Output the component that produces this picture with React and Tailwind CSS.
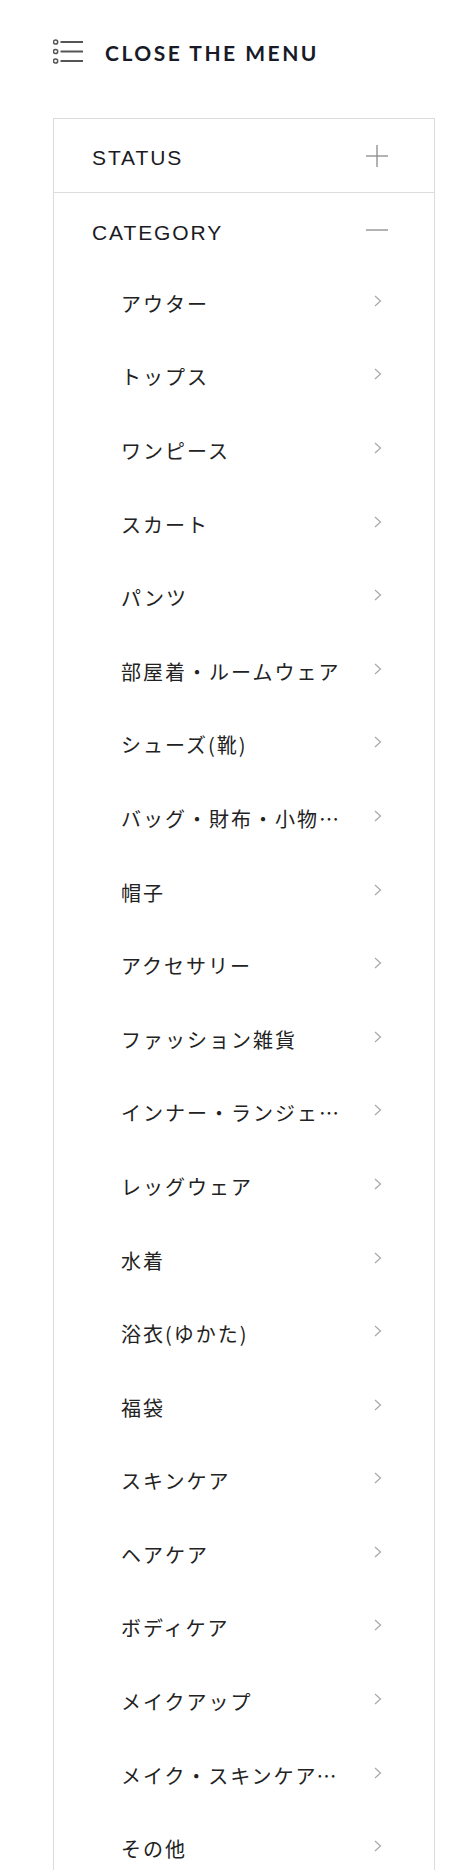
import React from 'react'

const categories = [
    "アウター",
    "トップス",
    "ワンピース",
    "スカート",
    "パンツ",
    "部屋着・ルームウェア",
    "シューズ(靴)",
    "バッグ・財布・小物入れ",
    "帽子",
    "アクセサリー",
    "ファッション雑貨",
    "インナー・ランジェリー",
    "レッグウェア",
    "水着",
    "浴衣(ゆかた)",
    "福袋",
    "スキンケア",
    "ヘアケア",
    "ボディケア",
    "メイクアップ",
    "メイク・スキンケアグッズ",
    "その他",
]

const MenuIcon = () => (
    <svg width="30" height="26" viewBox="0 0 30 26" fill="none">
        <circle cx="2.6" cy="4" r="2.1" stroke="#555" strokeWidth="1.5" />
        <circle cx="2.6" cy="13.5" r="2.1" stroke="#555" strokeWidth="1.5" />
        <circle cx="2.6" cy="23" r="2.1" stroke="#555" strokeWidth="1.5" />
        <line x1="7.5" y1="4" x2="30" y2="4" stroke="#555" strokeWidth="2" />
        <line x1="7.5" y1="13.5" x2="30" y2="13.5" stroke="#555" strokeWidth="2" />
        <line x1="7.5" y1="23" x2="30" y2="23" stroke="#555" strokeWidth="2" />
    </svg>
)

const Plus = () => (
    <svg width="22" height="22" viewBox="0 0 22 22" fill="none">
        <line x1="0" y1="11" x2="22" y2="11" stroke="#8a8a8a" strokeWidth="1.3" />
        <line x1="11" y1="0" x2="11" y2="22" stroke="#8a8a8a" strokeWidth="1.3" />
    </svg>
)

const Minus = () => (
    <svg width="22" height="22" viewBox="0 0 22 22" fill="none">
        <line x1="0" y1="11" x2="22" y2="11" stroke="#8a8a8a" strokeWidth="1.3" />
    </svg>
)

const Chevron = () => (
    <svg width="8" height="12" viewBox="0 0 8 12" fill="none">
        <polyline points="1,1 6.5,6 1,11" stroke="#ababab" strokeWidth="1.3" />
    </svg>
)

const App = () => {
    return (
        <div className="min-h-screen bg-white pl-[53px] pr-[39px] font-['Liberation_Sans','Noto_Sans_CJK_JP',sans-serif]">
            {/* header */}
            <div className="flex items-center h-[40px] mt-[31px]">
                <MenuIcon />
                <span className="ml-[22px] font-['Lato',sans-serif] font-bold text-[21px] tracking-[2.5px] text-[#181a28] leading-none pt-[3px]">
                    CLOSE THE MENU
                </span>
            </div>

            <div className="mt-[47px] border border-[#dcdcdc]">
                <div className="flex items-center justify-between h-[74px] pl-[38px] pr-[46px] border-b border-[#dcdcdc]">
                    <span className="text-[21px] tracking-[1.9px] text-[#1b1b1f] pt-[5px]">STATUS</span>
                    <Plus />
                </div>

                <div className="flex items-center justify-between h-[74px] pl-[38px] pr-[46px]">
                    <span className="text-[21px] tracking-[1.9px] text-[#1b1b1f] pt-[5px]">CATEGORY</span>
                    <Minus />
                </div>

                <ul className="pl-[67px] pr-[52px]">
                    {categories.map((item) => (
                        <li key={item} className="flex items-center justify-between h-[73.6px]">
                            <span className="w-[228px] truncate font-['Noto_Sans_CJK_JP',sans-serif] text-[20px] tracking-[2px] text-[#222]">
                                {item}
                            </span>
                            <span className="-mt-[6px]">
                                <Chevron />
                            </span>
                        </li>
                    ))}
                </ul>
            </div>
        </div>
    )
}

export default App
